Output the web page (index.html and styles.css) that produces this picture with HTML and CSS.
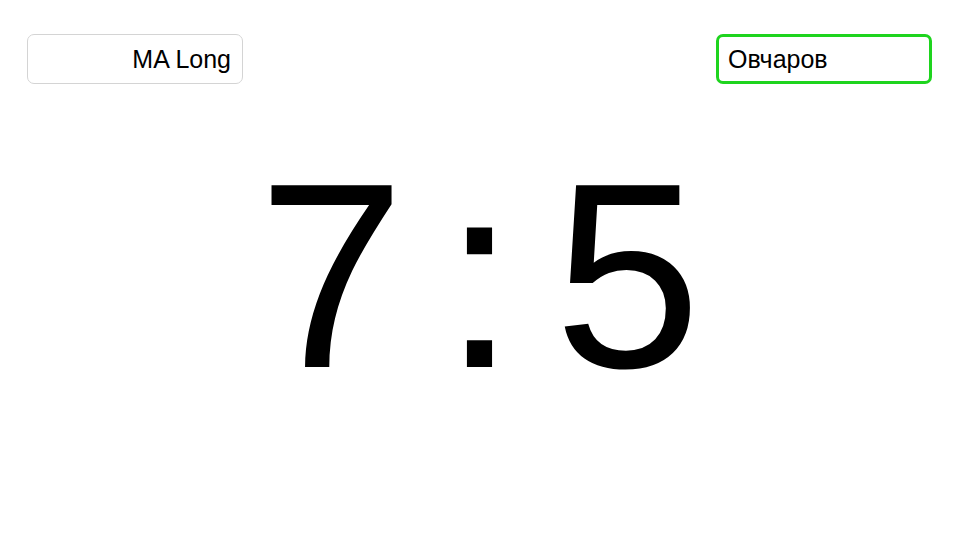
FILE: index.html
```html
<!DOCTYPE html>
<html lang="en">
<head>
    <meta charset="UTF-8">
    <meta name="viewport" content="width=device-width, initial-scale=1.0">
    <title>Scoreboard</title>
    <link rel="stylesheet" href="styles.css">
</head>
<body>
    <div class="players">
        <input class="player player-left" type="text" value="MA Long">
        <input class="player player-right active" type="text" value="Овчаров">
    </div>

    <div class="score">
        <span class="points">7</span>
        <span class="sep">:</span>
        <span class="points">5</span>
    </div>
</body>
</html>
```

FILE: styles.css
```css
body {
    font-family: 'Liberation Sans', Arial, sans-serif;
    margin: 0;
    height: 100vh;
    background-color: white;
    color: black;
}
.players {
    display: flex;
    justify-content: space-between;
    padding: 34px 27px 0 27px;
}
.player {
    box-sizing: border-box;
    width: 216px;
    height: 50px;
    padding: 0 11px;
    font-family: inherit;
    font-size: 25px;
    color: black;
    background: white;
    border: 1px solid #d4d4d4;
    border-radius: 7px;
    outline: none;
}
.player-left {
    text-align: right;
}
.player-right {
    text-align: left;
}
.player.active {
    border: 3px solid #1ed41e;
    padding: 0 9px;
}
.score {
    display: flex;
    justify-content: center;
    align-items: baseline;
    gap: 38px;
    font-size: 264px;
    line-height: 1;
    margin-top: 60px;
}
```
